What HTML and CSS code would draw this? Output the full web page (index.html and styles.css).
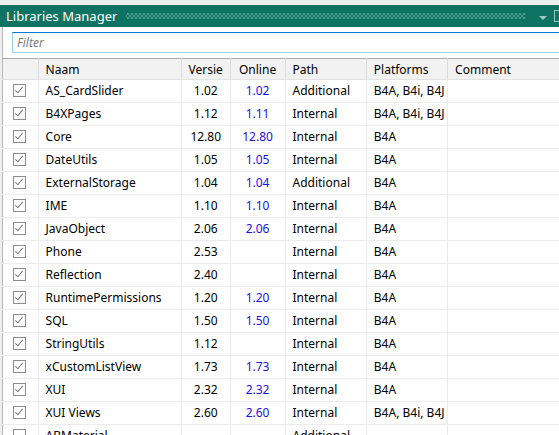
FILE: index.html
```html
<!DOCTYPE html>
<html lang="nl">
<head>
    <meta charset="UTF-8">
    <title>Libraries Manager</title>
    <link rel="stylesheet" href="styles.css">
</head>
<body>

<div class="panel">
    <div class="titlebar">
        <span class="title">Libraries Manager</span>
        <span class="grip"></span>
        <span class="menu-arrow"></span>
        <span class="pin"></span>
    </div>

    <div class="filter-row">
        <input class="filter" type="text" placeholder="Filter">
    </div>

    <table class="libs">
        <thead>
            <tr>
                <th class="col-check"></th>
                <th class="col-name">Naam</th>
                <th class="col-ver">Versie</th>
                <th class="col-online">Online</th>
                <th class="col-path">Path</th>
                <th class="col-plat">Platforms</th>
                <th class="col-comment">Comment</th>
            </tr>
        </thead>
        <tbody id="lib-rows"></tbody>
    </table>
</div>

<script>
    const libs = [
        ["AS_CardSlider", "1.02", "1.02", "Additional", "B4A, B4i, B4J", true],
        ["B4XPages", "1.12", "1.11", "Internal", "B4A, B4i, B4J", true],
        ["Core", "12.80", "12.80", "Internal", "B4A", true],
        ["DateUtils", "1.05", "1.05", "Internal", "B4A", true],
        ["ExternalStorage", "1.04", "1.04", "Additional", "B4A", true],
        ["IME", "1.10", "1.10", "Internal", "B4A", true],
        ["JavaObject", "2.06", "2.06", "Internal", "B4A", true],
        ["Phone", "2.53", "", "Internal", "B4A", true],
        ["Reflection", "2.40", "", "Internal", "B4A", true],
        ["RuntimePermissions", "1.20", "1.20", "Internal", "B4A", true],
        ["SQL", "1.50", "1.50", "Internal", "B4A", true],
        ["StringUtils", "1.12", "", "Internal", "B4A", true],
        ["xCustomListView", "1.73", "1.73", "Internal", "B4A", true],
        ["XUI", "2.32", "2.32", "Internal", "B4A", true],
        ["XUI Views", "2.60", "2.60", "Internal", "B4A, B4i, B4J", true],
        ["ABMaterial", "", "", "Additional", "", false]
    ];

    const tbody = document.getElementById("lib-rows");
    libs.forEach(lib => {
        const tr = document.createElement("tr");
        tr.innerHTML =
            '<td class="col-check"><span class="box' + (lib[5] ? ' checked' : '') + '"></span></td>' +
            '<td class="col-name">' + lib[0] + '</td>' +
            '<td class="col-ver">' + lib[1] + '</td>' +
            '<td class="col-online">' + lib[2] + '</td>' +
            '<td class="col-path">' + lib[3] + '</td>' +
            '<td class="col-plat">' + lib[4] + '</td>' +
            '<td class="col-comment"></td>';
        tbody.appendChild(tr);
    });
</script>

</body>
</html>
```

FILE: styles.css
```css
body {
    margin: 0;
    padding: 0;
    background-color: #eeeeee;
    font-family: "Noto Sans", "Open Sans", sans-serif;
    font-size: 12px;
    color: #000;
    overflow: hidden;
}
.panel {
    padding-top: 5px;
    height: 430px;
}
.titlebar {
    display: flex;
    align-items: center;
    height: 22px;
    background-color: #0e7362;
    color: white;
    padding-left: 6px;
}
.title {
    font-size: 13px;
    white-space: nowrap;
}
.grip {
    flex: 1;
    height: 6px;
    margin: 0 14px 0 9px;
    background-image:
        radial-gradient(circle, #6fb3a5 0.6px, transparent 0.9px),
        radial-gradient(circle, #6fb3a5 0.6px, transparent 0.9px);
    background-size: 4px 4px, 4px 4px;
    background-position: 0 -1px, 2px 1px;
}
.menu-arrow {
    width: 0;
    height: 0;
    border-left: 4px solid transparent;
    border-right: 4px solid transparent;
    border-top: 4px solid #9cc9c0;
    margin-top: 3px;
    margin-right: 7px;
}
.pin {
    width: 4px;
    height: 10px;
    border: 1px solid #9cc9c0;
    border-right: none;
}
.filter-row {
    background-color: white;
    border-left: 1px solid #b8b8b8;
    margin-left: 2px;
    padding: 5px 0 5px 9px;
}
.filter {
    display: block;
    box-sizing: border-box;
    width: 548px;
    height: 21px;
    border: 1px solid #99d1f0;
    border-top-color: #0078d7;
    padding: 0 4px;
    font-family: "Noto Sans", "Open Sans", sans-serif;
    font-size: 12px;
    outline: none;
}
.filter::placeholder {
    color: #7a7a7a;
    font-style: italic;
}
.libs {
    margin-left: 2px;
    border-collapse: collapse;
    table-layout: fixed;
    width: 560px;
    background-color: white;
    border-left: 1px solid #b8b8b8;
}
.libs th {
    height: 20px;
    background-color: #f2f2f2;
    border-top: 1px solid #a8a8a8;
    border-right: 1px solid #dcdcdc;
    border-bottom: 1px solid #e2e2e2;
    font-weight: normal;
    text-align: left;
    padding: 0 0 0 7px;
    white-space: nowrap;
}
.libs td {
    height: 21px;
    border-right: 1px solid #ececec;
    border-bottom: 1px solid #ececec;
    padding: 0 0 1px 7px;
    white-space: nowrap;
    overflow: hidden;
}
.libs .col-check {
    width: 27px;
    padding-left: 7px;
}
.libs .col-name { width: 133px; }
.libs .col-ver { width: 47px; text-align: center; padding-left: 0; }
.libs .col-online { width: 53px; text-align: center; padding-left: 0; color: #1a10e8; }
.libs th.col-online { color: #000; }
.libs .col-path { width: 72px; }
.libs .col-plat { width: 72px; }
.libs .col-comment { width: 104px; }
.box {
    display: block;
    position: relative;
    box-sizing: border-box;
    width: 13px;
    height: 13px;
    margin-left: 3px;
    border: 1px solid #8c8c8c;
    background-color: white;
}
.box.checked::after {
    content: "";
    position: absolute;
    left: 3px;
    top: 0;
    width: 3px;
    height: 7px;
    border-right: 1.5px solid #7a7a7a;
    border-bottom: 1.5px solid #7a7a7a;
    transform: rotate(40deg);
}
```
